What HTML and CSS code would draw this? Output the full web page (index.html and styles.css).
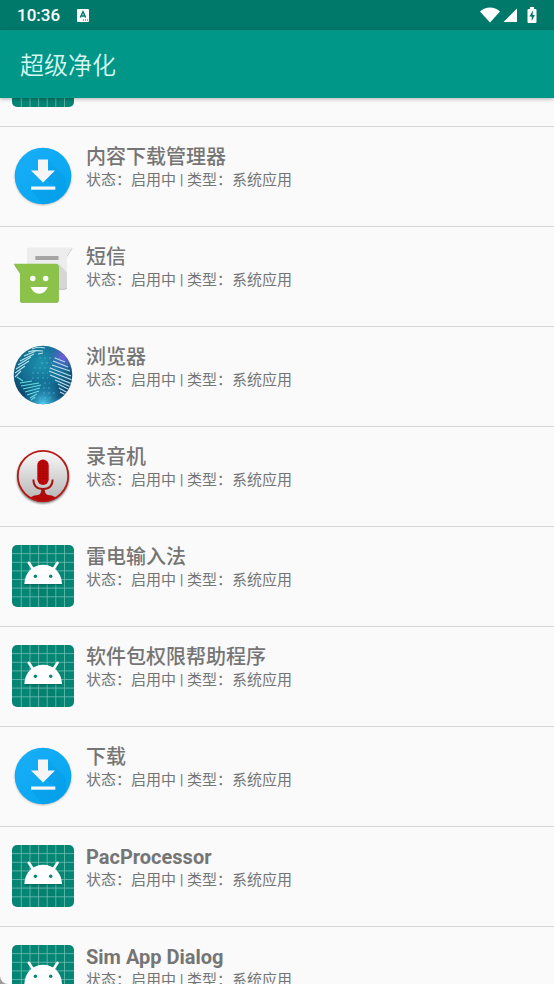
FILE: index.html
```
<!DOCTYPE html>
<html lang="zh-CN">
<head>
    <meta charset="UTF-8">
    <meta name="viewport" content="width=device-width, initial-scale=1.0">
    <title>超级净化</title>
    <link rel="stylesheet" href="styles.css">
</head>
<body>
    <!-- 图标 -->
    <svg class="sprite" aria-hidden="true">
        <defs>
            <linearGradient id="blueFill" x1="0" y1="0" x2="1" y2="1">
                <stop offset="0" stop-color="#1aaef7"/>
                <stop offset="1" stop-color="#03a5f0"/>
            </linearGradient>
            <radialGradient id="globeFill" cx="0.48" cy="0.3" r="0.75">
                <stop offset="0" stop-color="#1c93ae"/>
                <stop offset="0.5" stop-color="#136d92"/>
                <stop offset="0.85" stop-color="#0d4468"/>
                <stop offset="1" stop-color="#1b6fa3"/>
            </radialGradient>
            <radialGradient id="globeGlow" cx="0.5" cy="1" r="0.4">
                <stop offset="0" stop-color="#4fd0f5"/>
                <stop offset="1" stop-color="#1c8fc0" stop-opacity="0"/>
            </radialGradient>
            <radialGradient id="globeViolet" cx="0.86" cy="0.18" r="0.3">
                <stop offset="0" stop-color="#7a5ce0"/>
                <stop offset="1" stop-color="#3b64b8" stop-opacity="0"/>
            </radialGradient>
            <linearGradient id="silver" x1="0" y1="0" x2="0" y2="1">
                <stop offset="0" stop-color="#fafafa"/>
                <stop offset="1" stop-color="#b4b4b4"/>
            </linearGradient>
            <clipPath id="tileClip"><rect width="62" height="62" rx="5"/></clipPath>
            <clipPath id="globeClip"><circle cx="31" cy="30" r="29"/></clipPath>
            <clipPath id="recClip"><circle cx="31" cy="31" r="25"/></clipPath>
            <clipPath id="dlClip"><circle cx="31" cy="31" r="28"/></clipPath>
            <filter id="soft" x="-20%" y="-20%" width="140%" height="140%"><feGaussianBlur stdDeviation="1.3"/></filter>
        </defs>

        <symbol id="android" viewBox="0 0 62 62">
            <g clip-path="url(#tileClip)">
                <rect width="62" height="62" fill="#058675"/>
                <path d="M13 39H36L48 50V62H36Z" fill="#00604f" opacity="0.15"/>
                <path d="M9.3 0V62M18 0V62M26.6 0V62M35.2 0V62M43.8 0V62M52.5 0V62M0 8.6H62M0 17.3H62M0 25.9H62M0 34.5H62M0 43.1H62M0 51.8H62" stroke="#6fbdb1" stroke-width="0.8"/>
            </g>
            <path d="M12.3 40.5C12.8 28 21 21 31.2 21S49.5 28 50 40.5Z" fill="#00564b" opacity="0.4"/>
            <path d="M12.3 39C12.8 27.5 21 19.8 31.2 19.8S49.5 27.5 50 39Z" fill="#fff"/>
            <path d="M16.8 17.8L21 24M45.6 17.800L41.4 24" stroke="#fff" stroke-width="2.6" stroke-linecap="round"/>
            <circle cx="23.4" cy="31.3" r="1.7" fill="#058675"/>
            <circle cx="38.7" cy="31.3" r="1.7" fill="#058675"/>
        </symbol>

        <symbol id="download" viewBox="0 0 62 62">
            <circle cx="31" cy="32" r="28" fill="#000" opacity="0.3" filter="url(#soft)"/>
            <circle cx="31" cy="31" r="28.3" fill="url(#blueFill)"/>
            <g clip-path="url(#dlClip)">
                <path d="M36 15L54 33V54L31 60L19 45H43V41L33 35L43 25.5H36Z" fill="#0277bd" opacity="0.12"/>
            </g>
            <path d="M26 14.6H36V25.4H43L31 37.6L19 25.4H26Z" fill="#f5f5f5"/>
            <rect x="19" y="41.5" width="24.3" height="3.2" fill="#f5f5f5"/>
        </symbol>

        <symbol id="sms" viewBox="0 0 62 62">
            <path d="M17 2.5H60.5L55 11V41.5Q55 44 52.5 44H17.5Q15 44 15 41.5V5Q15 2.5 17 2.5Z" fill="#b5b5b5" transform="translate(0 0.7)"/>
            <path d="M17 2.5H60.5L55 11V41.5Q55 43.5 52.5 43.5H17.5Q15 43.5 15 41.5V5Q15 2.5 17 2.5Z" fill="#ededed"/>
            <path d="M46.7 19L55 27.3V41.5Q55 43.5 52.5 43.5H46.7Z" fill="#d6d6d6"/>
            <rect x="23.3" y="11" width="23.2" height="4" fill="#a6a6a6"/>
            <path d="M2 19.4L8 28.5V55.2Q8 57.8 10.6 57.8H44.1Q46.7 57.8 46.7 55.2V22Q46.7 19.4 44.1 19.4Z" fill="#77a53d"/>
            <path d="M2 18.8L8 27.8V54.5Q8 57 10.6 57H44.1Q46.7 57 46.7 54.5V21.4Q46.7 18.8 44.1 18.8Z" fill="#8bc34a"/>
            <circle cx="20.8" cy="33.5" r="2.7" fill="#fff"/>
            <circle cx="33.7" cy="33.5" r="2.7" fill="#fff"/>
            <path d="M18.5 42H35.8Q33 48.7 27.2 48.7T18.5 42Z" fill="#fff"/>
        </symbol>

        <symbol id="globe" viewBox="0 0 62 62">
            <circle cx="31" cy="30" r="29.3" fill="url(#globeFill)"/>
            <circle cx="31" cy="30" r="29.3" fill="url(#globeGlow)"/>
            <circle cx="31" cy="30" r="29.3" fill="url(#globeViolet)"/>
            <g clip-path="url(#globeClip)" fill="none">
                <path d="M27 13H48M29 18H40M22 23H40M20 28H36M20 33H36M32 38H38M31 43H41M31 48H44M22 53H42" stroke="#62c7d5" stroke-width="0.9" stroke-dasharray="2 3" opacity="0.65"/>
                <path d="M20 4Q25 1 33 3M16 7Q22 5 31 6M12 11L24 6M26 9L31 8M8 16L22 9M6 20L19 12M4 24L17 16M3 28L13 21M3 32L9 26" stroke="#b6e3ea" stroke-width="1.1"/>
                <path d="M5 32L11 36M8 38L20 36M9 41L27 38M11 44L29 40M13 47L28 43M15 50L27 46M18 53L25 49M19 55L23 52" stroke="#67dddd" stroke-width="1.1"/>
                <path d="M43 13L53 17M41 16L56 22M40 20L58 26M38 23L59 31M37 26L60 35M38 30L60 39M43 35L59 42M46 39L58 45M47 43L56 48M48 47L54 50" stroke="#b9dced" stroke-width="1.3"/>
            </g>
        </symbol>

        <symbol id="recorder" viewBox="0 0 62 62">
            <circle cx="31" cy="32.5" r="26" fill="#000" opacity="0.55" filter="url(#soft)"/>
            <circle cx="31" cy="31" r="25.2" fill="url(#silver)" stroke="#b81818" stroke-width="1.8"/>
            <path clip-path="url(#recClip)" d="M14 57L19 52Q22 50 26 50Q29 49 29 46H33Q33 49 36 50Q40 50 43 52L48 57Z" fill="#b50808"/>
            <path d="M21.4 34.5Q21.4 44 31 44T40.6 34.5" stroke="#a61212" stroke-width="1.9" fill="none"/>
            <path d="M31 44V50" stroke="#a61212" stroke-width="3.5"/>
            <rect x="25.3" y="14.5" width="11.4" height="25.5" rx="5.7" fill="#bd0707"/>
            <path d="M28 18V37M31 16V39M34 18V37" stroke="#7d0d0d" stroke-width="1" stroke-dasharray="1 1.5"/>
        </symbol>
    </svg>

    <div class="screen">
        <div class="status-bar">
            <span class="clock">10:36</span>
            <svg class="input-icon" viewBox="0 0 12 13">
                <rect width="12" height="13" rx="1" fill="#fff"/>
                <path d="M3.3 8.5L6 2.8L8.7 8.5M4.3 7H7.7" stroke="#00796b" stroke-width="1.5" fill="none"/>
                <path d="M6 11H7M8 11H9M10 11H11" stroke="#00796b"/>
            </svg>
            <div class="status-icons">
                <svg class="wifi" viewBox="0 0 20 16" fill="#fff"><path d="M0 4.5Q4.5 0.5 10 0.5T20 4.5L10 15.5Z"/></svg>
                <svg class="signal" viewBox="0 0 14 16" fill="#fff"><path d="M14 1.5V15H0.5Z"/></svg>
                <svg class="battery" viewBox="0 0 10 16">
                    <path d="M3 0H7V2H8.5Q9.5 2 9.5 3V15Q9.5 16 8.5 16H1.5Q0.5 16 0.5 15V3Q0.5 2 1.5 2H3Z" fill="#fff"/>
                    <path d="M6 3.5L2.3 9.5H4.7V14L7.9 8H5.7Z" fill="#00796b"/>
                </svg>
            </div>
        </div>

        <header class="app-bar">
            <h1>超级净化</h1>
        </header>

        <main class="content">
            <ul class="app-list">
                <li class="app-row scrolled">
                    <svg class="app-icon"><use href="#android"/></svg>
                </li>
                <li class="app-row">
                    <svg class="app-icon"><use href="#download"/></svg>
                    <div class="app-info">
                        <h2>内容下载管理器</h2>
                        <p>状态：启用中 | 类型：系统应用</p>
                    </div>
                </li>
                <li class="app-row">
                    <svg class="app-icon"><use href="#sms"/></svg>
                    <div class="app-info">
                        <h2>短信</h2>
                        <p>状态：启用中 | 类型：系统应用</p>
                    </div>
                </li>
                <li class="app-row">
                    <svg class="app-icon"><use href="#globe"/></svg>
                    <div class="app-info">
                        <h2>浏览器</h2>
                        <p>状态：启用中 | 类型：系统应用</p>
                    </div>
                </li>
                <li class="app-row">
                    <svg class="app-icon"><use href="#recorder"/></svg>
                    <div class="app-info">
                        <h2>录音机</h2>
                        <p>状态：启用中 | 类型：系统应用</p>
                    </div>
                </li>
                <li class="app-row">
                    <svg class="app-icon"><use href="#android"/></svg>
                    <div class="app-info">
                        <h2>雷电输入法</h2>
                        <p>状态：启用中 | 类型：系统应用</p>
                    </div>
                </li>
                <li class="app-row">
                    <svg class="app-icon"><use href="#android"/></svg>
                    <div class="app-info">
                        <h2>软件包权限帮助程序</h2>
                        <p>状态：启用中 | 类型：系统应用</p>
                    </div>
                </li>
                <li class="app-row">
                    <svg class="app-icon"><use href="#download"/></svg>
                    <div class="app-info">
                        <h2>下载</h2>
                        <p>状态：启用中 | 类型：系统应用</p>
                    </div>
                </li>
                <li class="app-row">
                    <svg class="app-icon"><use href="#android"/></svg>
                    <div class="app-info">
                        <h2 lang="en">PacProcessor</h2>
                        <p>状态：启用中 | 类型：系统应用</p>
                    </div>
                </li>
                <li class="app-row">
                    <svg class="app-icon"><use href="#android"/></svg>
                    <div class="app-info">
                        <h2 lang="en">Sim App Dialog</h2>
                        <p>状态：启用中 | 类型：系统应用</p>
                    </div>
                </li>
            </ul>
        </main>
    </div>
</body>
</html>
```
FILE: styles.css
```
* {
    box-sizing: border-box;
    margin: 0;
    padding: 0;
}
body {
    font-family: Roboto, "Noto Sans CJK SC", sans-serif;
    background: #9a9a9a;
    color: #757575;
}
.sprite {
    position: absolute;
    width: 0;
    height: 0;
}
.screen {
    display: flex;
    flex-direction: column;
    height: 100vh;
    background: #fafafa;
    border-bottom-left-radius: 8px;
    overflow: hidden;
}
.status-bar {
    display: flex;
    align-items: center;
    flex: none;
    height: 30px;
    padding: 0 17px;
    background: #00796b;
    color: #fff;
}
.clock {
    font-size: 17px;
    font-weight: 500;
    line-height: 30px;
}
.input-icon {
    width: 12px;
    height: 13px;
    margin-left: 17px;
}
.status-icons {
    display: flex;
    margin-left: auto;
}
.wifi {
    width: 20px;
    height: 16px;
}
.signal {
    width: 14px;
    height: 16px;
    margin-left: 3px;
}
.battery {
    width: 10px;
    height: 16px;
    margin-left: 10px;
}
.app-bar {
    display: flex;
    align-items: center;
    flex: none;
    height: 68px;
    padding: 0 20px 2px;
    background: #009688;
    color: #d5f7f1;
    box-shadow: 0 1px 4px rgba(0, 0, 0, 0.3);
    z-index: 1;
}
.app-bar h1 {
    font-size: 24px;
    font-weight: 350;
}
.content {
    flex: 1;
    min-height: 0;
    overflow: hidden;
}
.app-list {
    list-style: none;
}
.app-row {
    display: flex;
    align-items: flex-start;
    padding: 18px 12px 19px;
    border-bottom: 1px solid #d8d8d8;
}
.app-row.scrolled {
    margin-top: -71px;
}
.app-icon {
    flex: none;
    width: 62px;
    height: 62px;
}
.app-info {
    margin-left: 12px;
}
.app-info h2 {
    font-size: 20px;
    font-weight: 500;
    line-height: 24px;
}
.app-info h2:lang(en) {
    font-weight: 700;
}
.app-info p {
    font-size: 15px;
    line-height: 22px;
}
```
